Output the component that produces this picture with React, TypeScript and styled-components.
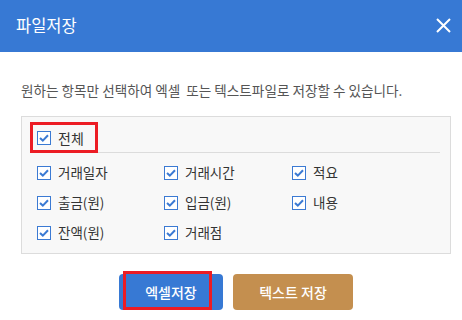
import React from "react";
import styled, { createGlobalStyle } from "styled-components";

const Global = createGlobalStyle`
  html, body { margin: 0; padding: 0; background: #ffffff; }
  body { width: 462px; height: 320px; overflow: hidden; font-family: "Noto Sans CJK KR", "Noto Sans", sans-serif; }
  * { box-sizing: border-box; }
`;

const Dialog = styled.div`
  width: 462px;
  height: 320px;
  background: #fff;
  display: flex;
  flex-direction: column;
`;

const Header = styled.div`
  height: 52px;
  background: #3779d4;
  display: flex;
  align-items: center;
  justify-content: space-between;
  padding: 0 8px 0 16px;
`;

const Title = styled.h1`
  margin: 0;
  font-size: 16.5px;
  font-weight: 400;
  color: #fff;
  line-height: 20px;
  padding-bottom: 2px;
`;

const CloseBtn = styled.button`
  width: 22px;
  height: 22px;
  padding: 0;
  border: none;
  background: transparent;
  display: flex;
  align-items: center;
  justify-content: center;
  cursor: pointer;
  margin-bottom: 1px;
`;

const Body = styled.div`
  padding: 28px 11px 0 21px;
  display: flex;
  flex-direction: column;
`;

const Desc = styled.p`
  margin: 0;
  font-size: 13.6px;
  line-height: 20px;
  color: #555;
`;

const Box = styled.div`
  margin-top: 16px;
  border: 1px solid #dcdcdc;
  background: #f8f8f8;
  padding: 0 0 5px 0;
`;

const AllRow = styled.div`
  margin: 0 10px 0 8px;
  padding: 8px 0 2px 3px;
  border-bottom: 1px solid #dcdcdc;
  display: flex;
`;

const Grid = styled.div`
  display: grid;
  grid-template-columns: 127px 128px 1fr;
  grid-auto-rows: 30px;
  padding: 5px 0 0 15px;
`;

const Label = styled.label<{ $marked?: boolean }>`
  display: flex;
  align-items: center;
  gap: 7px;
  font-size: ${(p) => (p.$marked ? "14px" : "13.5px")};
  color: #333;
  cursor: pointer;
  height: ${(p) => (p.$marked ? "25px" : "30px")};
  padding: ${(p) => (p.$marked ? "0 11px 0 4px" : "0")};
  outline: ${(p) => (p.$marked ? "3px solid #ec1c24" : "none")};
  line-height: 1;
`;

const Box14 = styled.span`
  width: 14px;
  height: 14px;
  border: 1.5px solid #3b7ad3;
  background: #fff;
  display: inline-flex;
  align-items: center;
  justify-content: center;
  flex: none;
`;

const Footer = styled.div`
  margin-top: 20px;
  display: flex;
  justify-content: center;
  gap: 10px;
  padding-left: 10px;
`;

const BtnWrap = styled.div`
  position: relative;
`;

const Button = styled.button<{ $tone: "blue" | "tan"; $w: number }>`
  width: ${(p) => p.$w}px;
  height: 36px;
  border: none;
  border-radius: 4px;
  background: ${(p) => (p.$tone === "blue" ? "#3779d4" : "#c48f4f")};
  color: #fff;
  font-family: inherit;
  font-size: 14px;
  font-weight: 500;
  cursor: pointer;
`;

const Mark = styled.span`
  position: absolute;
  left: 4px;
  top: -3px;
  width: 89px;
  height: 39px;
  border: 3px solid #ec1c24;
  pointer-events: none;
`;

const Check = () => (
  <Box14>
    <svg width="10" height="8" viewBox="0 0 10 8">
      <path d="M1 4 L3.8 6.6 L9 1.2" fill="none" stroke="#3b7ad3" strokeWidth="2" />
    </svg>
  </Box14>
);

const items = ["거래일자", "거래시간", "적요", "출금(원)", "입금(원)", "내용", "잔액(원)", "거래점"];

export default function App() {
  return (
    <>
      <Global />
      <Dialog>
        <Header>
          <Title>파일저장</Title>
          <CloseBtn aria-label="close">
            <svg width="15" height="15" viewBox="0 0 15 15">
              <path d="M1 1 L14 14 M14 1 L1 14" stroke="#fff" strokeWidth="2" />
            </svg>
          </CloseBtn>
        </Header>
        <Body>
          <Desc>원하는 항목만 선택하여 엑셀&nbsp; 또는 텍스트파일로 저장할 수 있습니다.</Desc>
          <Box>
            <AllRow>
              <Label $marked>
                <Check />
                전체
              </Label>
            </AllRow>
            <Grid>
              {items.map((t) => (
                <Label key={t}>
                  <Check />
                  {t}
                </Label>
              ))}
            </Grid>
          </Box>
        </Body>
        <Footer>
          <BtnWrap>
            <Button $tone="blue" $w={104}>엑셀저장</Button>
            <Mark />
          </BtnWrap>
          <Button $tone="tan" $w={120}>텍스트 저장</Button>
        </Footer>
      </Dialog>
    </>
  );
}
